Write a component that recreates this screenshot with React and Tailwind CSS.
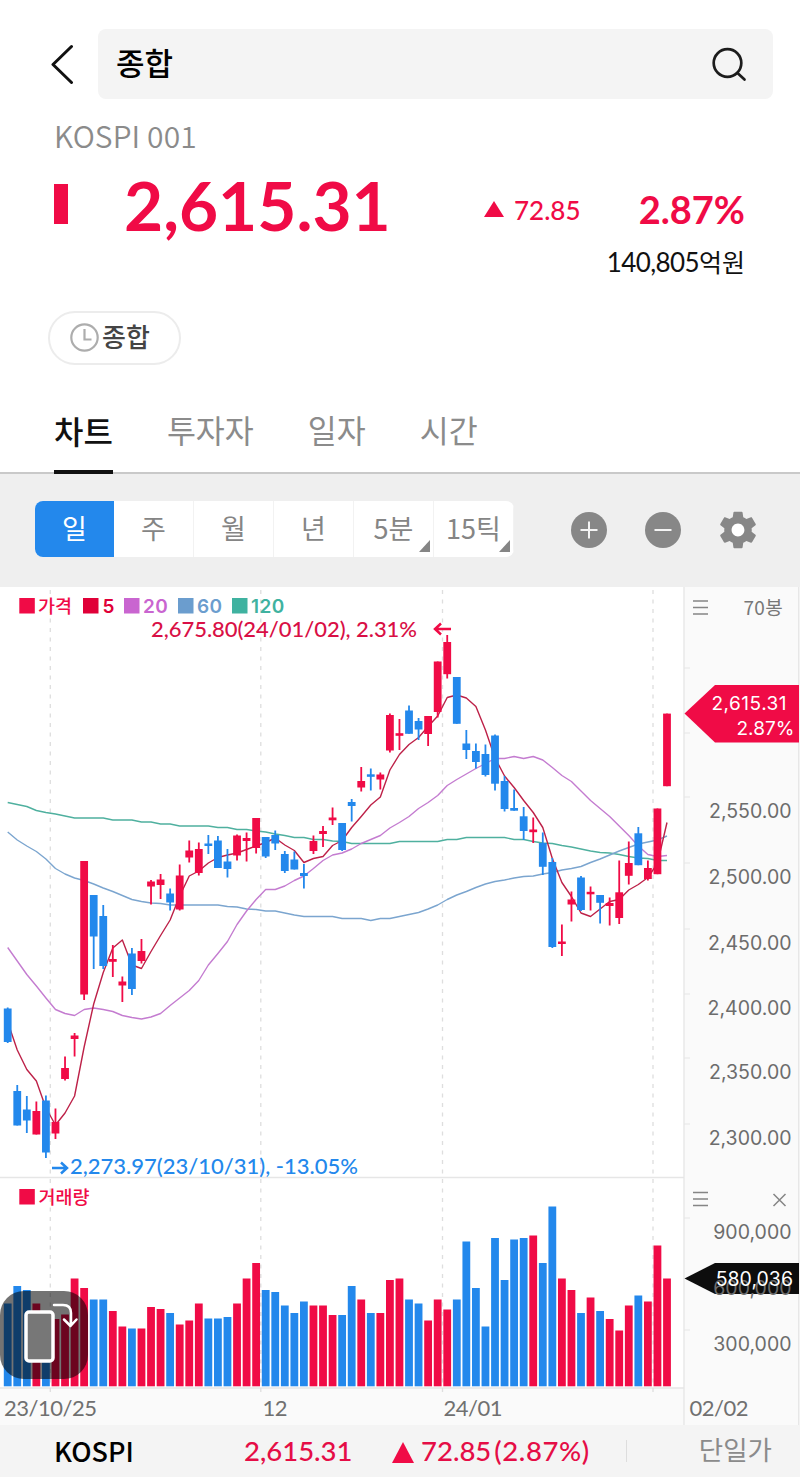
const RED = '#f00b46';
const BLUE = '#2388ec';
const STEP = 9.555;

// [direction, high, body top, body bottom, low]
const candles = [
  ['d', 1007.5, 1008.5, 1042, 1043], ['d', 1085, 1091, 1125.5, 1125.5], ['d', 1096, 1109.5, 1120.5, 1133],
  ['u', 1101.5, 1111, 1134.5, 1134.5], ['d', 1095.5, 1100.5, 1152.5, 1158], ['u', 1108.5, 1122, 1133.5, 1139],
  ['u', 1056.5, 1068, 1079, 1080.5], ['u', 1033, 1035.5, 1039, 1056.5], ['u', 861, 861, 994.5, 1000],
  ['d', 895, 895, 936.5, 969], ['d', 905, 916, 966, 969], ['u', 945, 959, 961.8, 977],
  ['u', 976.5, 981.5, 985.5, 1002], ['d', 948, 953.5, 989, 995], ['u', 939, 951, 961, 963.5],
  ['u', 880, 881.5, 886.5, 904.5], ['u', 874, 879.5, 885, 899], ['d', 888.5, 893.5, 902.5, 910.5],
  ['u', 864.5, 875.5, 909.5, 910.5], ['u', 840.5, 850.5, 857.5, 862.5], ['u', 842.5, 849, 873, 875.5],
  ['d', 835, 843.5, 846, 854], ['d', 836, 840.5, 868, 868], ['d', 849, 861.5, 869, 877.5],
  ['u', 834.5, 835.5, 855.5, 860.5], ['u', 832.5, 838, 841, 861.5], ['u', 818, 818, 848, 853.5],
  ['d', 837, 837, 856.5, 858], ['d', 830.5, 835, 843.5, 850], ['d', 851, 854, 871, 873],
  ['d', 851.5, 859.5, 869.5, 869.5], ['d', 864, 873, 876, 888.5], ['u', 835.5, 841, 851, 854],
  ['u', 826, 831, 834, 847], ['u', 807.5, 817.5, 820.3, 825], ['d', 823, 823, 850, 851],
  ['d', 799, 802, 806, 821.5], ['u', 767, 781, 787.5, 791.5], ['d', 768.5, 774.3, 776.8, 790.5],
  ['u', 772.5, 774.5, 779.5, 789.5], ['u', 713.5, 715, 750.5, 752.5], ['u', 719, 733.2, 735.8, 750],
  ['d', 705.5, 710.5, 733.8, 733.8], ['d', 718, 721, 729.5, 740], ['u', 716, 716, 734, 746],
  ['u', 661.5, 661.5, 712, 717.5], ['u', 635, 642, 674.2, 678.5], ['d', 677, 677, 723.8, 723.8],
  ['d', 730, 743.5, 750, 759], ['d', 743.5, 751, 762, 768.5], ['d', 744.5, 754, 775, 776.5],
  ['d', 734.5, 735.5, 783.7, 790.5], ['d', 776, 781, 809, 811.5], ['d', 789.5, 808, 810.7, 810.7],
  ['d', 807, 816.3, 831, 840], ['u', 817.5, 829.5, 832.2, 843], ['d', 832.5, 843, 866.8, 875],
  ['d', 858, 862, 947, 948], ['u', 924.5, 941.5, 944, 956], ['u', 891.5, 899.5, 904.5, 921.5],
  ['d', 876, 877.5, 910, 911], ['u', 886.5, 891.8, 894.3, 910.5], ['d', 895, 895, 902.8, 923.5],
  ['u', 897.5, 903, 906, 925.5], ['u', 860.5, 892.3, 918, 924], ['u', 841.5, 863, 875.8, 884.5],
  ['d', 827, 833.3, 865.2, 865.2], ['u', 860.5, 868, 879, 880.5], ['u', 808.5, 808.5, 874.2, 874.2],
  ['u', 713.6, 713.6, 786.2, 786.2],
];

const ma5 = [
  1022, 1050, 1069.5, 1081, 1108, 1125, 1113, 1096, 1047, 1004, 972.5, 948, 940, 965, 968.5, 951.5, 935.5, 920,
  896, 876, 871, 863, 857.5, 855, 853, 849.5, 846, 842.5, 838, 845, 850.5, 862.5, 858.5, 856.5, 845.5, 840.5,
  827.5, 816.5, 805, 797, 770, 754.5, 744.5, 737.5, 726.5, 716, 697.5, 695, 698, 706.5, 730, 758, 776, 787.5,
  800.5, 812.5, 827.5, 858.5, 882.5, 896.5, 913, 916.5, 909, 901.5, 899.5, 890, 884.5, 877.5, 863.5, 822.5,
];
const ma20 = [
  947.5, 961, 974.5, 986, 998, 1009.5, 1013.5, 1015.5, 1009.5, 1008, 1009.5, 1011.5, 1015.5, 1017.5, 1019, 1017,
  1013.5, 1005.5, 998, 990.5, 980.5, 965, 953.5, 941.5, 924.5, 911, 899.5, 889.5, 889.5, 886, 880.5, 876, 868.5,
  860.5, 855, 853, 849, 843.5, 839.5, 835.5, 828, 822.5, 816.5, 808.5, 802.5, 795.5, 785.5, 779.5, 774, 768.5,
  763.5, 758.5, 758.5, 756.5, 758.5, 756.5, 760, 767.5, 775.5, 781.5, 791, 800.5, 808.5, 816.5, 826, 835.5, 846,
  854.5, 856.5, 855.5,
];
const ma60 = [
  832, 840, 846, 851.5, 859, 868.5, 874, 878, 880.5, 884, 888, 891.5, 895.5, 899.5, 901.5, 903, 903.5, 905, 905,
  905, 905, 905, 905, 906.5, 907, 909, 909.5, 911, 911, 913, 915, 916.5, 916.5, 916.5, 916.5, 918.5, 918.5, 918.5,
  920.5, 918.5, 918.5, 916.5, 914.5, 912.5, 909, 905, 899.5, 895, 891.5, 887.5, 884, 881.5, 880, 878, 876.5, 876,
  874, 872.5, 870, 868.5, 866.5, 862.5, 859, 855, 851, 847.5, 844, 842, 840, 836,
];
const ma120 = [
  802.5, 804.5, 806.5, 810.5, 812.5, 814, 816, 818, 818, 818, 818, 820, 820, 820, 822, 822, 824, 824, 826, 826, 826,
  826, 827.5, 827.5, 829.5, 829.5, 831, 832, 834, 835.5, 837.5, 837.5, 839.5, 839.5, 841, 841.5, 843.5, 843.5, 843.5,
  843.5, 843.5, 841.5, 841.5, 841.5, 841.5, 841.5, 839.5, 839.5, 837.5, 837.5, 837.5, 837.5, 837.5, 839.5, 839.5,
  841.5, 843, 843.5, 845.5, 847, 849, 851, 852.5, 853, 854.5, 856.5, 858, 858.5, 860.5, 860.5,
];

const volumes = [
  1303.5, 1286, 1290, 1303.5, 1318, 1319, 1314.5, 1278.5, 1288, 1299.5, 1299.5, 1311, 1326.5, 1328.5, 1328.5, 1307,
  1309, 1313, 1324.5, 1320.5, 1303.5, 1318.5, 1318.5, 1317, 1303.5, 1278.5, 1263, 1290, 1292, 1305.5, 1313, 1301.5,
  1305.5, 1305.5, 1315, 1315, 1286, 1299.5, 1313, 1313, 1280, 1278.5, 1299.5, 1303.5, 1320.5, 1299.5, 1309.5, 1299.5,
  1241.5, 1288, 1326.5, 1238, 1280, 1239.5, 1238, 1235.5, 1263, 1206.5, 1278.5, 1290, 1313, 1297.5, 1311, 1319,
  1330.5, 1305.5, 1295.5, 1301.5, 1245.5, 1278.5,
];

const gridX = [50.3, 260.8, 442.5, 653];
const priceTicks = [
  ['2,550.00', 811], ['2,500.00', 876.5], ['2,450.00', 942.5], ['2,400.00', 1008], ['2,350.00', 1072], ['2,300.00', 1137.5],
];
const legend = [
  ['가격', 19.3, 38, RED], ['5', 83, 102.5, '#e00038'], ['20', 124, 143, '#c965d0'], ['60', 178, 197, '#6b9dce'], ['120', 232, 251, '#3fb2a0'],
];

const tabs = ['차트', '투자자', '일자', '시간'];
const periods = [
  { label: '일', active: true }, { label: '주' }, { label: '월' }, { label: '년' },
  { label: '5분', more: true }, { label: '15틱', more: true },
];

const barX = (i) => 7.7 + i * STEP;
const toPoints = (values) => values.map((y, i) => `${barX(i)},${y}`).join(' ');

function SearchHeader() {
  return (
    <header className="flex items-center pt-[29px] pl-[50px] pr-[27px]">
      <svg className="w-6 h-10 mr-6 shrink-0" viewBox="0 0 24 40" fill="none" stroke="#111" strokeWidth="3" strokeLinecap="round" strokeLinejoin="round">
        <path d="M21.500 2.500L3 20.500l18.500 18" />
      </svg>
      <div className="flex flex-1 items-center justify-between h-[70px] pl-[18px] pr-[26px] rounded-lg bg-[#f4f4f4]">
        <span className="pb-[5px] text-[31px] leading-none font-medium text-black">종합</span>
        <svg className="w-9 h-9" viewBox="0 0 36 36" fill="none" stroke="#1c1c1c" strokeWidth="2.700" strokeLinecap="round">
          <circle cx="16.500" cy="17" r="13.800" />
          <path d="M26.500 27l7 6.500" />
        </svg>
      </div>
    </header>
  );
}

function Quote() {
  return (
    <section className="pl-[54px] pr-[55px] text-[#f00b46]">
      <p className="h-[74px] pt-[20px] text-[30px] leading-[32px] tracking-[0.1px] font-[350] text-[#8b8b8b]">KOSPI 001</p>
      <div className="flex items-center h-[70px]">
        <div className="w-[14px] h-10 mb-[8px] bg-[#f00b46]" />
        <span className="w-[265px] ml-[56px] mb-[7px] font-[Lato] text-[67.500px] leading-none font-bold">2,615.31</span>
        <svg className="w-5 h-4 ml-[95px] mt-[1px]" viewBox="0 0 20 16"><path d="M10 0l10 16H0z" fill={RED} /></svg>
        <span className="ml-[10px] mt-[3px] font-[Lato] text-[26px] leading-none font-medium">72.85</span>
        <span className="ml-auto mt-[2px] font-[Lato] text-[38px] leading-none font-bold">2.87%</span>
      </div>
      <p className="text-right text-[25px] leading-[36px] text-[#111]"><span className="font-[Lato] text-[26px] tracking-[-0.6px]">140,805</span>억원</p>
    </section>
  );
}

function Tabs() {
  return (
    <nav className="flex h-[111px] pl-[54px] gap-[54px] border-b-2 border-[#c9c9c9]">
      {tabs.map((tab, i) => (
        <button key={tab} className={i === 0 ? 'h-[111px] pt-[26px] border-b-4 border-[#111] text-[32px] font-medium text-[#111]' : 'h-[111px] pt-[22px] text-[31.500px] text-[#8b8b8b]'}>
          {tab}
        </button>
      ))}
    </nav>
  );
}

function Toolbar() {
  return (
    <div className="flex items-center h-[113px] pl-[35px] pb-px bg-[#efefef]">
      <div className="flex w-[479px] h-14 mb-[2px] rounded-lg overflow-hidden bg-white">
        {periods.map(({ label, active, more }) => (
          <button
            key={label}
            className={active ? 'relative flex-1 pb-[2px] bg-[#2388ec] text-[27px] text-white' : 'relative flex-1 pb-[2px] border-r border-[#f2f2f2] text-[27px] text-[#858585]'}
          >
            {label}
            {more && (
              <svg className="absolute right-[3px] bottom-[5px] w-[11px] h-[12px]" viewBox="0 0 11 12"><path d="M11 0v12H0z" fill="#858585" /></svg>
            )}
          </button>
        ))}
      </div>
      <svg className="w-9 h-9 ml-[57px]" viewBox="0 0 36 36"><circle cx="18" cy="18" r="18" fill="#878787" /><path d="M9.500 18h17M18 9.500v17" stroke="#f4f4f4" strokeWidth="2" /></svg>
      <svg className="w-9 h-9 ml-[38px]" viewBox="0 0 36 36"><circle cx="18" cy="18" r="18" fill="#878787" /><path d="M9.500 18h17" stroke="#f4f4f4" strokeWidth="2" /></svg>
      <svg className="w-[44px] h-[44px] ml-[35px]" viewBox="0 0 24 24">
        <circle cx="12" cy="12" r="4" fill="#fff" />
        <path fill="#878787" d="M19.430 12.980c.04-.32.07-.64.07-.98s-.03-.66-.07-.98l2.110-1.650c.19-.15.24-.42.12-.64l-2-3.460c-.12-.22-.39-.3-.61-.22l-2.490 1c-.52-.4-1.080-.73-1.690-.98l-.38-2.650C14.460 2.180 14.250 2 14 2h-4c-.25 0-.46.18-.49.42l-.38 2.650c-.61.25-1.170.59-1.690.98l-2.490-1c-.23-.09-.49 0-.61.22l-2 3.460c-.13.22-.07.49.12.64l2.110 1.650c-.04.32-.07.65-.07.98s.03.66.07.98l-2.110 1.650c-.19.15-.24.42-.12.64l2 3.460c.12.22.39.3.61.22l2.490-1c.52.4 1.080.73 1.690.98l.38 2.650c.03.24.24.42.49.42h4c.25 0 .46-.18.49-.42l.38-2.650c.61-.25 1.170-.59 1.690-.98l2.490 1c.23.09.49 0 .61-.22l2-3.460c.12-.22.07-.49-.12-.64l-2.110-1.650zM12 15.500c-1.930 0-3.500-1.570-3.500-3.500s1.570-3.500 3.500-3.500 3.500 1.570 3.500 3.500-1.570 3.500-3.500 3.500z" />
      </svg>
    </div>
  );
}

function MenuLines({ y }) {
  return <path d={`M693 ${y}h15M693 ${y + 6.5}h15M693 ${y + 13}h15`} stroke="#858585" strokeWidth="1.500" />;
}

function StockChart() {
  return (
    <svg className="block w-[800px] h-[838px]" viewBox="0 587 800 838">
      <rect x="0" y="587" width="800" height="838" fill="#fff" />
      <rect x="684" y="587" width="116" height="838" fill="#fafafa" />
      <rect x="0" y="1388" width="684" height="37" fill="#fafafa" />
      <path d="M684 587v838M798.700 587v838M0 1177.500h684M0 1388h684" stroke="#e6e6e6" strokeWidth="1.300" fill="none" />
      {gridX.map((x) => (
        <line key={x} x1={x} x2={x} y1="590" y2="1392" stroke="#dedede" strokeWidth="1.300" strokeDasharray="4 5.500" />
      ))}
      {[668, 733, 797, 863, 929, 994, 1058, 1124, 1218, 1330].map((y) => (
        <line key={y} x1="684" x2="690" y1={y} y2={y} stroke="#e6e6e6" />
      ))}

      <g fill="none" strokeWidth="1.400" strokeLinejoin="round">
        <polyline points={toPoints(ma120)} stroke="#4fb09f" />
        <polyline points={toPoints(ma60)} stroke="#7ba5cf" />
        <polyline points={toPoints(ma20)} stroke="#c47cd0" />
        <polyline points={toPoints(ma5)} stroke="#bd2148" />
      </g>

      {candles.map(([dir, high, top, bottom, low], i) => (
        <g key={i} fill={dir === 'u' ? RED : BLUE}>
          <rect x={barX(i) - 0.9} y={high} width="1.800" height={low - high} />
          <rect x={barX(i) - 3.9} y={top} width="7.800" height={bottom - top} />
        </g>
      ))}
      {volumes.map((y, i) => (
        <rect key={i} x={barX(i) - 3.9} y={y} width="7.800" height={1386.3 - y} fill={candles[i][0] === 'u' ? RED : BLUE} />
      ))}

      {legend.map(([label, boxX, textX, color]) => (
        <g key={label} fill={color}>
          <rect x={boxX} y="598" width="15.500" height="15.500" />
          <text x={textX} y="612.500" className={label === '가격' ? 'text-[18.500px] font-medium' : 'font-[Inter] text-[19px] font-semibold tracking-[0.4px]'}>{label}</text>
        </g>
      ))}
      <g fill={RED}>
        <rect x="19.300" y="1189" width="15.500" height="15.500" />
        <text x="38.500" y="1203.500" className="text-[18.500px] font-medium">거래량</text>
      </g>

      <text x="151" y="636.500" fill="#d90f45" className="font-[Lato] text-[22px] font-medium tracking-[-0.04px]">2,675.80(24/01/02), 2.31%</text>
      <path d="M451 629h-16M441 623.500l-6 5.500 6 5.500" fill="none" stroke={RED} strokeWidth="2.500" />
      <text x="70" y="1174" fill={BLUE} className="font-[Lato] text-[22px] font-medium">2,273.97(23/10/31), -13.05%</text>
      <path d="M52 1168h15M61 1162.500l6 5.500-6 5.500" fill="none" stroke={BLUE} strokeWidth="2.500" />

      <MenuLines y={601} />
      <MenuLines y={1192.5} />
      <path d="M773.500 1194l12 12M785.500 1194l-12 12" stroke="#858585" strokeWidth="1.500" />
      <text x="743.500" y="614.500" fill="#777" className="text-[19px] tracking-[0.3px]">70봉</text>
      <g fill="#6c6c6c" textAnchor="end" className="font-[Inter] text-[19.500px]">
        {priceTicks.map(([label, y]) => <text key={label} x="791.500" y={y + 7}>{label}</text>)}
        <text x="791.500" y="1239">900,000</text>
        <text x="791.500" y="1351">300,000</text>
      </g>

      <path d="M684.500 713.500L715 685h84v57.500h-84z" fill={RED} />
      <g fill="#fff" className="font-[Inter] text-[19px]">
        <text x="711.500" y="709.500" className="tracking-[0.5px]">2,615.31</text>
        <text x="736.500" y="735">2.87%</text>
      </g>
      <path d="M684.500 1278.500L715 1263h84v31h-84z" fill="#0d0d0d" />
      <g textAnchor="end" className="font-[Inter] text-[19.500px]">
        <text x="791.500" y="1295" fill="#6c6c6c">600,000</text>
        <text x="793" y="1285.500" fill="#fff">580,036</text>
      </g>

      <g fill="#707070" className="font-[Lato] text-[22px] tracking-[-0.5px]">
        <text x="4" y="1415.500">23/10/25</text>
        <text x="262.500" y="1415.500">12</text>
        <text x="443.500" y="1415.500">24/01</text>
        <text x="689.500" y="1415.500">02/02</text>
      </g>
    </svg>
  );
}

function RotateButton() {
  return (
    <button className="absolute left-0 top-[704px] w-[88px] h-[88px] rounded-[24px] bg-black/55">
      <svg className="w-[88px] h-[88px]" viewBox="0 0 88 88" fill="none" stroke="#fff" strokeLinecap="round" strokeLinejoin="round">
        <rect x="26" y="21" width="27" height="49" rx="3" fill="#777" strokeWidth="3.500" />
        <path d="M54 14h9q8 0 8 8v12M64 28.500l6.500 6.500 6-6.500" strokeWidth="2.500" />
      </svg>
    </button>
  );
}

function Footer() {
  return (
    <footer className="flex items-center h-[52px] pl-[54px] pr-[28px] bg-[#f4f4f4] text-[27.500px] leading-none">
      <span className="w-[190px] pb-[2px] text-[27px] font-[450] text-black">KOSPI</span>
      <span className="w-[109px] font-[Lato] font-medium text-[#e50d46]">2,615.31</span>
      <svg className="w-[22px] h-[21px] ml-[39px] mt-[3px]" viewBox="0 0 22 21"><path d="M11 0l11 21H0z" fill={RED} /></svg>
      <span className="ml-[7px] font-[Lato] font-medium text-[#e50d46]">72.85<span className="ml-[3px] tracking-[0.6px]">(2.87%)</span></span>
      <span className="w-px h-[22px] ml-auto bg-[#ddd]" />
      <span className="ml-[72px] pb-[3px] text-[26.500px] text-[#8b8b8b]">단일가</span>
    </footer>
  );
}

export default function App() {
  return (
    <div className="w-[800px] h-[1477px] overflow-hidden bg-white font-['Noto_Sans_CJK_KR',sans-serif]">
      <SearchHeader />
      <Quote />
      <div className="h-[83px] pt-[31px] pl-[48px]">
        <button className="flex items-center w-[133px] h-[54px] pl-[20px] gap-[3px] border-2 border-[#ececec] rounded-full text-[26px] leading-none font-medium text-[#444]">
          <svg className="w-[29px] h-[29px] mb-[2px]" viewBox="0 0 29 29" fill="none" stroke="#adadad" strokeWidth="2.200">
            <circle cx="14.500" cy="14.500" r="13.200" />
            <path d="M14.500 6v10.500h7" />
          </svg>
          <span className="pb-1">종합</span>
        </button>
      </div>
      <Tabs />
      <Toolbar />
      <div className="relative">
        <StockChart />
        <RotateButton />
      </div>
      <Footer />
    </div>
  );
}
